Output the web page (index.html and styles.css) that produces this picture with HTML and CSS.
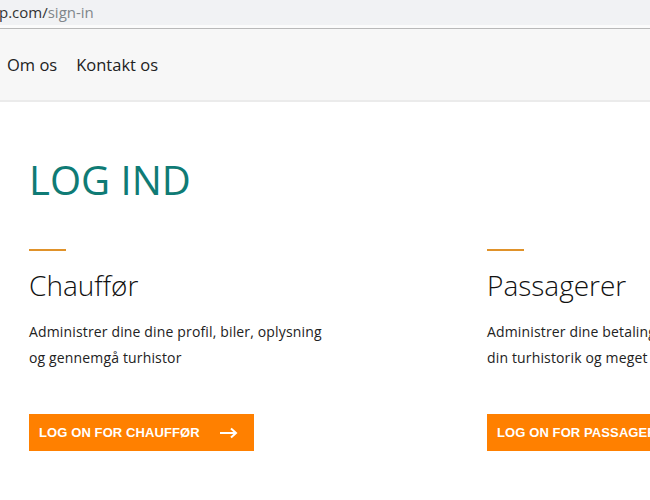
FILE: index.html
```html
<!DOCTYPE html>
<html lang="da">
<head>
    <meta charset="UTF-8">
    <meta name="viewport" content="width=device-width, initial-scale=1.0">
    <title>Log ind</title>
    <link rel="stylesheet" href="styles.css">
</head>
<body>
    <div class="address-bar">
        <span class="host">p.com/</span><span class="path">sign-in</span>
    </div>

    <nav class="top-nav">
        <a href="#">Om os</a>
        <a href="#">Kontakt os</a>
    </nav>

    <main class="sign-in">
        <h1 class="page-title">LOG IND</h1>

        <div class="roles">
            <section class="role">
                <div class="accent"></div>
                <h2>Chauffør</h2>
                <p>Administrer dine dine profil, biler, oplysning<br>og gennemgå turhistor</p>
                <a href="#" class="btn">LOG ON FOR CHAUFFØR
                    <svg class="arrow" width="19" height="12" viewBox="0 0 19 12"><path d="M1 6h16M12 1.5l5 4.5-5 4.5" fill="none" stroke="#fff" stroke-width="2"/></svg>
                </a>
            </section>

            <section class="role">
                <div class="accent"></div>
                <h2>Passagerer</h2>
                <p>Administrer dine betalingsmetoder, se<br>din turhistorik og meget mere</p>
                <a href="#" class="btn">LOG ON FOR PASSAGERER
                    <svg class="arrow" width="19" height="12" viewBox="0 0 19 12"><path d="M1 6h16M12 1.5l5 4.5-5 4.5" fill="none" stroke="#fff" stroke-width="2"/></svg>
                </a>
            </section>
        </div>
    </main>
</body>
</html>
```

FILE: styles.css
```css
:root {
    --teal: #0f7b75;
    --orange: #ff8000;
    --line: #e0922a;
}
* {
    margin: 0;
    padding: 0;
    box-sizing: border-box;
}
html, body {
    overflow: hidden;
}
body {
    background: #fff;
    font-family: "Open Sans", "DejaVu Sans", sans-serif;
    color: #1a1a1a;
}
.address-bar {
    height: 29px;
    background: #f1f2f4;
    border-bottom: 1px solid #b9b9b9;
    box-shadow: inset 0 -3px 0 #fbfbfb;
    padding: 1px 0 0 0;
    font-size: 15px;
    line-height: 22px;
    margin-left: -1px;
}
.address-bar .host {
    color: #333;
}
.address-bar .path {
    color: #80868b;
}
.top-nav {
    height: 73px;
    background: #f7f7f7;
    border-bottom: 2px solid #ebebeb;
    display: flex;
    align-items: center;
    gap: 19px;
    padding: 0 0 0 7px;
}
.top-nav a {
    color: #222;
    text-decoration: none;
    font-size: 16.5px;
}
.sign-in {
    padding: 51px 0 0 29px;
}
.page-title {
    font-weight: 400;
    font-size: 40px;
    color: var(--teal);
    line-height: 54px;
}
.roles {
    display: grid;
    grid-template-columns: 428px 428px;
    gap: 30px;
    margin-top: 42px;
}
.accent {
    width: 37px;
    height: 2px;
    background: var(--line);
}
.role h2 {
    font-weight: 300;
    font-size: 28px;
    line-height: 38px;
    margin-top: 15px;
    color: #111;
}
.role p {
    font-size: 14px;
    letter-spacing: 0.15px;
    line-height: 26px;
    margin-top: 15px;
    color: #222;
}
.btn {
    display: inline-flex;
    align-items: center;
    gap: 19px;
    margin-top: 43px;
    height: 37px;
    padding: 0 16px 0 10px;
    background: var(--orange);
    color: #fff;
    font-family: "Liberation Sans", Arial, sans-serif;
    font-weight: 700;
    font-size: 13px;
    letter-spacing: 0.1px;
    text-decoration: none;
    white-space: nowrap;
}
.btn .arrow {
    display: block;
}
```
